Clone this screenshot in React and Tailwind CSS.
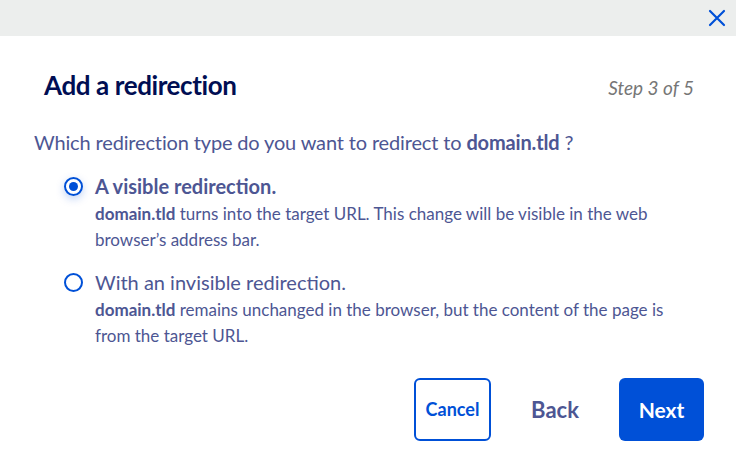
import React, { useState } from 'react';

const options = [
    {
        id: 'visible',
        label: 'A visible redirection.',
        rest: ' turns into the target URL. This change will be visible in the web browser’s address bar.',
    },
    {
        id: 'invisible',
        label: 'With an invisible redirection.',
        rest: ' remains unchanged in the browser, but the content of the page is from the target URL.',
    },
];

export default function App() {
    const [type, setType] = useState('visible');

    return (
        <div className="w-[736px] h-[455px] bg-white font-['Lato',sans-serif] text-[#4d5693] overflow-hidden">
            <div className="h-9 bg-[#eceeed] flex justify-end items-center pr-2">
                <button className="text-[#0050d7]" aria-label="Close">
                    <svg width="22" height="22" viewBox="0 0 22 22" fill="none" stroke="currentColor" strokeWidth="2.2" strokeLinecap="round">
                        <path d="M4 4 L18 18 M18 4 L4 18" />
                    </svg>
                </button>
            </div>

            <div className="flex items-baseline justify-between pl-11 pr-[42px] pt-[30px]">
                <h2 className="text-[26px] font-bold text-[#000e53] tracking-[-0.4px]">Add a redirection</h2>
                <span className="text-[19px] italic text-[#767676]">Step 3 of 5</span>
            </div>

            <p className="pl-[34px] mt-[22px] text-[20px] tracking-[-0.15px]">
                Which redirection type do you want to redirect to <strong>domain.tld</strong> ?
            </p>

            <div className="pl-16 pr-[60px] mt-[16px] flex flex-col gap-[16px]">
                {options.map((o) => {
                    const checked = type === o.id;
                    return (
                        <label key={o.id} className="flex gap-3 cursor-pointer">
                            <span
                                onClick={() => setType(o.id)}
                                className={
                                    'mt-[4px] w-[19px] h-[19px] shrink-0 rounded-full border-2 border-[#0050d7] flex items-center justify-center ' +
                                    (checked ? 'shadow-[0_3px_8px_rgba(0,80,215,0.25)]' : '')
                                }
                            >
                                {checked && <span className="w-[9px] h-[9px] rounded-full bg-[#0050d7]" />}
                            </span>
                            <span className="flex flex-col">
                                <span className={'text-[20px] leading-[26px] ' + (checked ? 'font-bold' : '')}>{o.label}</span>
                                <span className="text-[17px] leading-[26px] mt-[2px]">
                                    <strong>domain.tld</strong>
                                    {o.rest}
                                </span>
                            </span>
                        </label>
                    );
                })}
            </div>

            <div className="flex justify-end items-center pr-8 mt-[29px]">
                <button className="w-[77px] h-[63px] rounded-md border-2 border-[#0050d7] text-[#0050d7] font-bold text-[18px]">
                    Cancel
                </button>
                <button className="w-32 h-[63px] font-bold text-[22px] text-[#4d5693]">Back</button>
                <button className="w-[85px] h-[63px] rounded-md bg-[#0050d7] text-white font-bold text-[21px]">Next</button>
            </div>
        </div>
    );
}
